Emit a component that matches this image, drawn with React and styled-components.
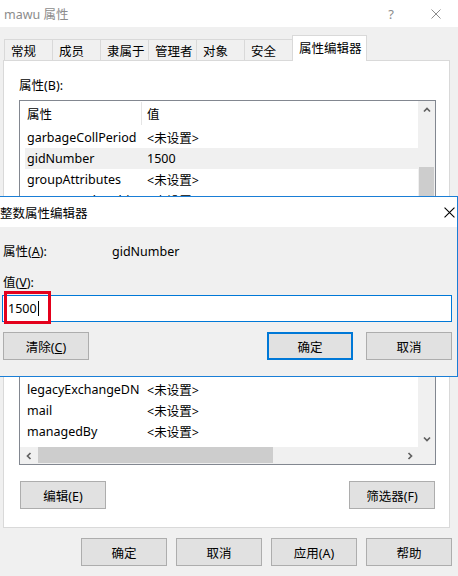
import styled, { createGlobalStyle } from "styled-components";

const GlobalStyle = createGlobalStyle`
  html, body {
    margin: 0;
    padding: 0;
    background: #f0f0f0;
  }
  body {
    font-family: "Noto Sans", "Noto Sans CJK SC", sans-serif;
    font-size: 12.5px;
    color: #000;
  }
  * { box-sizing: border-box; }
`;

const tabs = ["常规", "成员", "隶属于", "管理者", "对象", "安全", "属性编辑器"];

const rows = [
  ["garbageCollPeriod", "<未设置>"],
  ["gidNumber", "1500"],
  ["groupAttributes", "<未设置>"],
  ["groupMembershipSAM", "<未设置>"],
  ["groupPriority", "<未设置>"],
  ["groupsToIgnore", "<未设置>"],
  ["homeDirectory", "<未设置>"],
  ["homeDrive", "<未设置>"],
  ["homeMDB", "<未设置>"],
  ["homeMTA", "<未设置>"],
  ["homePhone", "<未设置>"],
  ["info", "<未设置>"],
  ["legacyExchangeDN", "<未设置>"],
  ["mail", "<未设置>"],
  ["managedBy", "<未设置>"],
  ["manager", "<未设置>"],
];

function Chevron({ dir }) {
  const pts = {
    up: "1,5.5 4,2.5 7,5.5",
    down: "1,2.5 4,5.5 7,2.5",
    left: "5.5,1 2.5,4 5.5,7",
    right: "2.5,1 5.5,4 2.5,7",
  }[dir];
  return (
    <svg width="8" height="8" viewBox="0 0 8 8">
      <polyline points={pts} fill="none" stroke="#606060" strokeWidth="1.7" />
    </svg>
  );
}

function CloseIcon({ color, size }) {
  return (
    <svg width={size} height={size} viewBox="0 0 10 10">
      <path d="M0.5 0.5 L9.5 9.5 M9.5 0.5 L0.5 9.5" stroke={color} strokeWidth="1" fill="none" />
    </svg>
  );
}

export default function App() {
  return (
    <>
      <GlobalStyle />
      <Window>
        <TitleBar>
          <TitleText>mawu 属性</TitleText>
          <TitleButton $w={46}>?</TitleButton>
          <TitleButton $w={44}>
            <CloseIcon color="#8c8c8c" size={10} />
          </TitleButton>
        </TitleBar>

        <TabStrip>
          {tabs.map((t, i) => (
            <Tab key={t} $active={i === tabs.length - 1} $first={i === 0}>
              {t}
            </Tab>
          ))}
        </TabStrip>

        <Panel>
          <Label>属性(B):</Label>
          <ListBox>
            <ListContent>
              <Header>
                <HeaderCell $w={122}>属性</HeaderCell>
                <HeaderCell>值</HeaderCell>
              </Header>
              {rows.map(([name, value]) => (
                <Row key={name} $selected={name === "gidNumber"}>
                  <NameCell>{name}</NameCell>
                  <span>{value}</span>
                </Row>
              ))}
            </ListContent>
            <VScroll>
              <ArrowBox>
                <Chevron dir="up" />
              </ArrowBox>
              <VThumb />
              <ArrowBox style={{ marginTop: "auto" }}>
                <Chevron dir="down" />
              </ArrowBox>
            </VScroll>
            <HScroll>
              <ArrowBox>
                <Chevron dir="left" />
              </ArrowBox>
              <HThumb />
              <ArrowBox style={{ marginLeft: "auto" }}>
                <Chevron dir="right" />
              </ArrowBox>
            </HScroll>
            <Corner />
          </ListBox>
          <PanelButtons>
            <Button>编辑(E)</Button>
            <Button>筛选器(F)</Button>
          </PanelButtons>
        </Panel>

        <BottomButtons>
          <Button>确定</Button>
          <Button>取消</Button>
          <Button>应用(A)</Button>
          <Button>帮助</Button>
        </BottomButtons>

        <Editor>
          <EditorTitle>
            <span>整数属性编辑器</span>
            <EditorClose>
              <CloseIcon color="#000" size={11} />
            </EditorClose>
          </EditorTitle>
          <EditorBody>
            <FieldRow>
              <FieldLabel>
                属性(<Key>A</Key>):
              </FieldLabel>
              <span>gidNumber</span>
            </FieldRow>
            <ValueLabel>
              值(<Key>V</Key>):
            </ValueLabel>
            <InputWrap>
              <Input>
                1500
                <Caret />
              </Input>
              <Highlight />
            </InputWrap>
            <EditorButtons>
              <Button>
                清除(<Key>C</Key>)
              </Button>
              <Spacer />
              <Button $primary>确定</Button>
              <Button>取消</Button>
            </EditorButtons>
          </EditorBody>
        </Editor>
      </Window>
    </>
  );
}

const Window = styled.div`
  position: relative;
  width: 458px;
  height: 576px;
  overflow: hidden;
  background: #f0f0f0;
`;

const TitleBar = styled.div`
  height: 27px;
  background: #fff;
  display: flex;
  align-items: center;
  padding-left: 4px;
  color: #8c8c8c;
`;

const TitleText = styled.span`
  flex: 1;
  font-size: 12.5px;
`;

const TitleButton = styled.span`
  width: ${(p) => p.$w}px;
  display: flex;
  justify-content: center;
  align-items: center;
  font-size: 13px;
  color: #8c8c8c;
`;

const TabStrip = styled.div`
  display: flex;
  align-items: flex-end;
  height: 33px;
  padding-left: 4px;
`;

const Tab = styled.div`
  position: relative;
  z-index: ${(p) => (p.$active ? 1 : 0)};
  display: flex;
  align-items: center;
  width: ${(p) => (p.$active ? 75 : 49)}px;
  height: ${(p) => (p.$active ? 26 : 21)}px;
  margin-left: ${(p) => (p.$first ? 0 : -1)}px;
  margin-bottom: ${(p) => (p.$active ? -1 : 0)}px;
  padding: 0 0 ${(p) => (p.$active ? 3 : 0)}px 6px;
  background: ${(p) => (p.$active ? "#fff" : "#f0f0f0")};
  border: 1px solid #d9d9d9;
  border-bottom: none;
  white-space: nowrap;
`;

const Panel = styled.div`
  display: flex;
  flex-direction: column;
  margin-left: 3px;
  width: 447px;
  height: 468px;
  padding: 17px 0 0 15px;
  background: #fff;
  border: 1px solid #d9d9d9;
`;

const Label = styled.div`
  line-height: 16px;
`;

const ListBox = styled.div`
  display: grid;
  grid-template-columns: 398px 17px;
  grid-template-rows: 346px 17px;
  width: 417px;
  height: 365px;
  margin-top: 6px;
  border: 1px solid #828790;
`;

const ListContent = styled.div`
  overflow: hidden;
  background: #fff;
`;

const Header = styled.div`
  display: flex;
  height: 26px;
  align-items: stretch;
`;

const HeaderCell = styled.div`
  display: flex;
  align-items: center;
  width: ${(p) => (p.$w ? `${p.$w}px` : "auto")};
  padding-left: ${(p) => (p.$w ? 7 : 5)}px;
  margin: 1px 0 2px;
  border-right: ${(p) => (p.$w ? "1px solid #e5e5e5" : "none")};
`;

const Row = styled.div`
  display: flex;
  align-items: center;
  height: 21px;
  margin-left: 5px;
  padding-left: 2px;
  background: ${(p) => (p.$selected ? "#f0f0f0" : "transparent")};
  white-space: nowrap;
`;

const NameCell = styled.span`
  width: 120px;
  flex-shrink: 0;
`;

const VScroll = styled.div`
  display: flex;
  flex-direction: column;
  background: #f0f0f0;
`;

const HScroll = styled.div`
  display: flex;
  background: #f0f0f0;
`;

const ArrowBox = styled.div`
  width: 17px;
  height: 17px;
  flex-shrink: 0;
  display: flex;
  align-items: center;
  justify-content: center;
`;

const VThumb = styled.div`
  margin: 49px 1px 0;
  height: 110px;
  background: #cdcdcd;
`;

const HThumb = styled.div`
  margin: 0 0 1px 1px;
  width: 235px;
  background: #cdcdcd;
`;

const Corner = styled.div`
  background: #f0f0f0;
`;

const PanelButtons = styled.div`
  display: flex;
  justify-content: space-between;
  width: 415px;
  margin: 16px 0 0 1px;
`;

const Button = styled.button`
  width: 86px;
  height: 28px;
  padding: 0;
  font: inherit;
  color: #000;
  background: #e1e1e1;
  border: ${(p) => (p.$primary ? "2px solid #0078d7" : "1px solid #adadad")};
  white-space: nowrap;
`;

const BottomButtons = styled.div`
  display: flex;
  justify-content: flex-end;
  gap: 9px;
  margin-top: 10px;
  padding-right: 6px;
`;

const Editor = styled.div`
  position: absolute;
  z-index: 5;
  top: 196px;
  left: -8px;
  width: 466px;
  height: 181px;
  display: flex;
  flex-direction: column;
  border: 1px solid #1a7ed6;
  background: #f0f0f0;
`;

const EditorTitle = styled.div`
  display: flex;
  align-items: center;
  height: 30px;
  padding-left: 7px;
  background: #fff;
`;

const EditorClose = styled.span`
  margin-left: auto;
  margin-right: 2px;
  width: 12px;
  display: flex;
  justify-content: center;
`;

const EditorBody = styled.div`
  flex: 1;
  display: flex;
  flex-direction: column;
  padding: 17px 5px 0 10px;
`;

const FieldRow = styled.div`
  display: flex;
  line-height: 16px;
`;

const FieldLabel = styled.span`
  width: 109px;
`;

const ValueLabel = styled.div`
  line-height: 16px;
  margin-top: 15px;
`;

const Key = styled.span`
  text-decoration: underline;
`;

const InputWrap = styled.div`
  position: relative;
  margin: 4px 0 0 -1px;
`;

const Input = styled.div`
  display: flex;
  align-items: center;
  height: 27px;
  padding-left: 5px;
  background: #fff;
  border: 1px solid #0078d7;
`;

const Caret = styled.span`
  width: 1px;
  height: 15px;
  margin-left: 1px;
  background: #000;
`;

const Highlight = styled.div`
  position: absolute;
  left: 2px;
  top: -4px;
  width: 47px;
  height: 33px;
  border: 3px solid #e3001b;
  pointer-events: none;
`;

const EditorButtons = styled.div`
  display: flex;
  gap: 13px;
  margin-top: 10px;
`;

const Spacer = styled.div`
  flex: 1;
`;
